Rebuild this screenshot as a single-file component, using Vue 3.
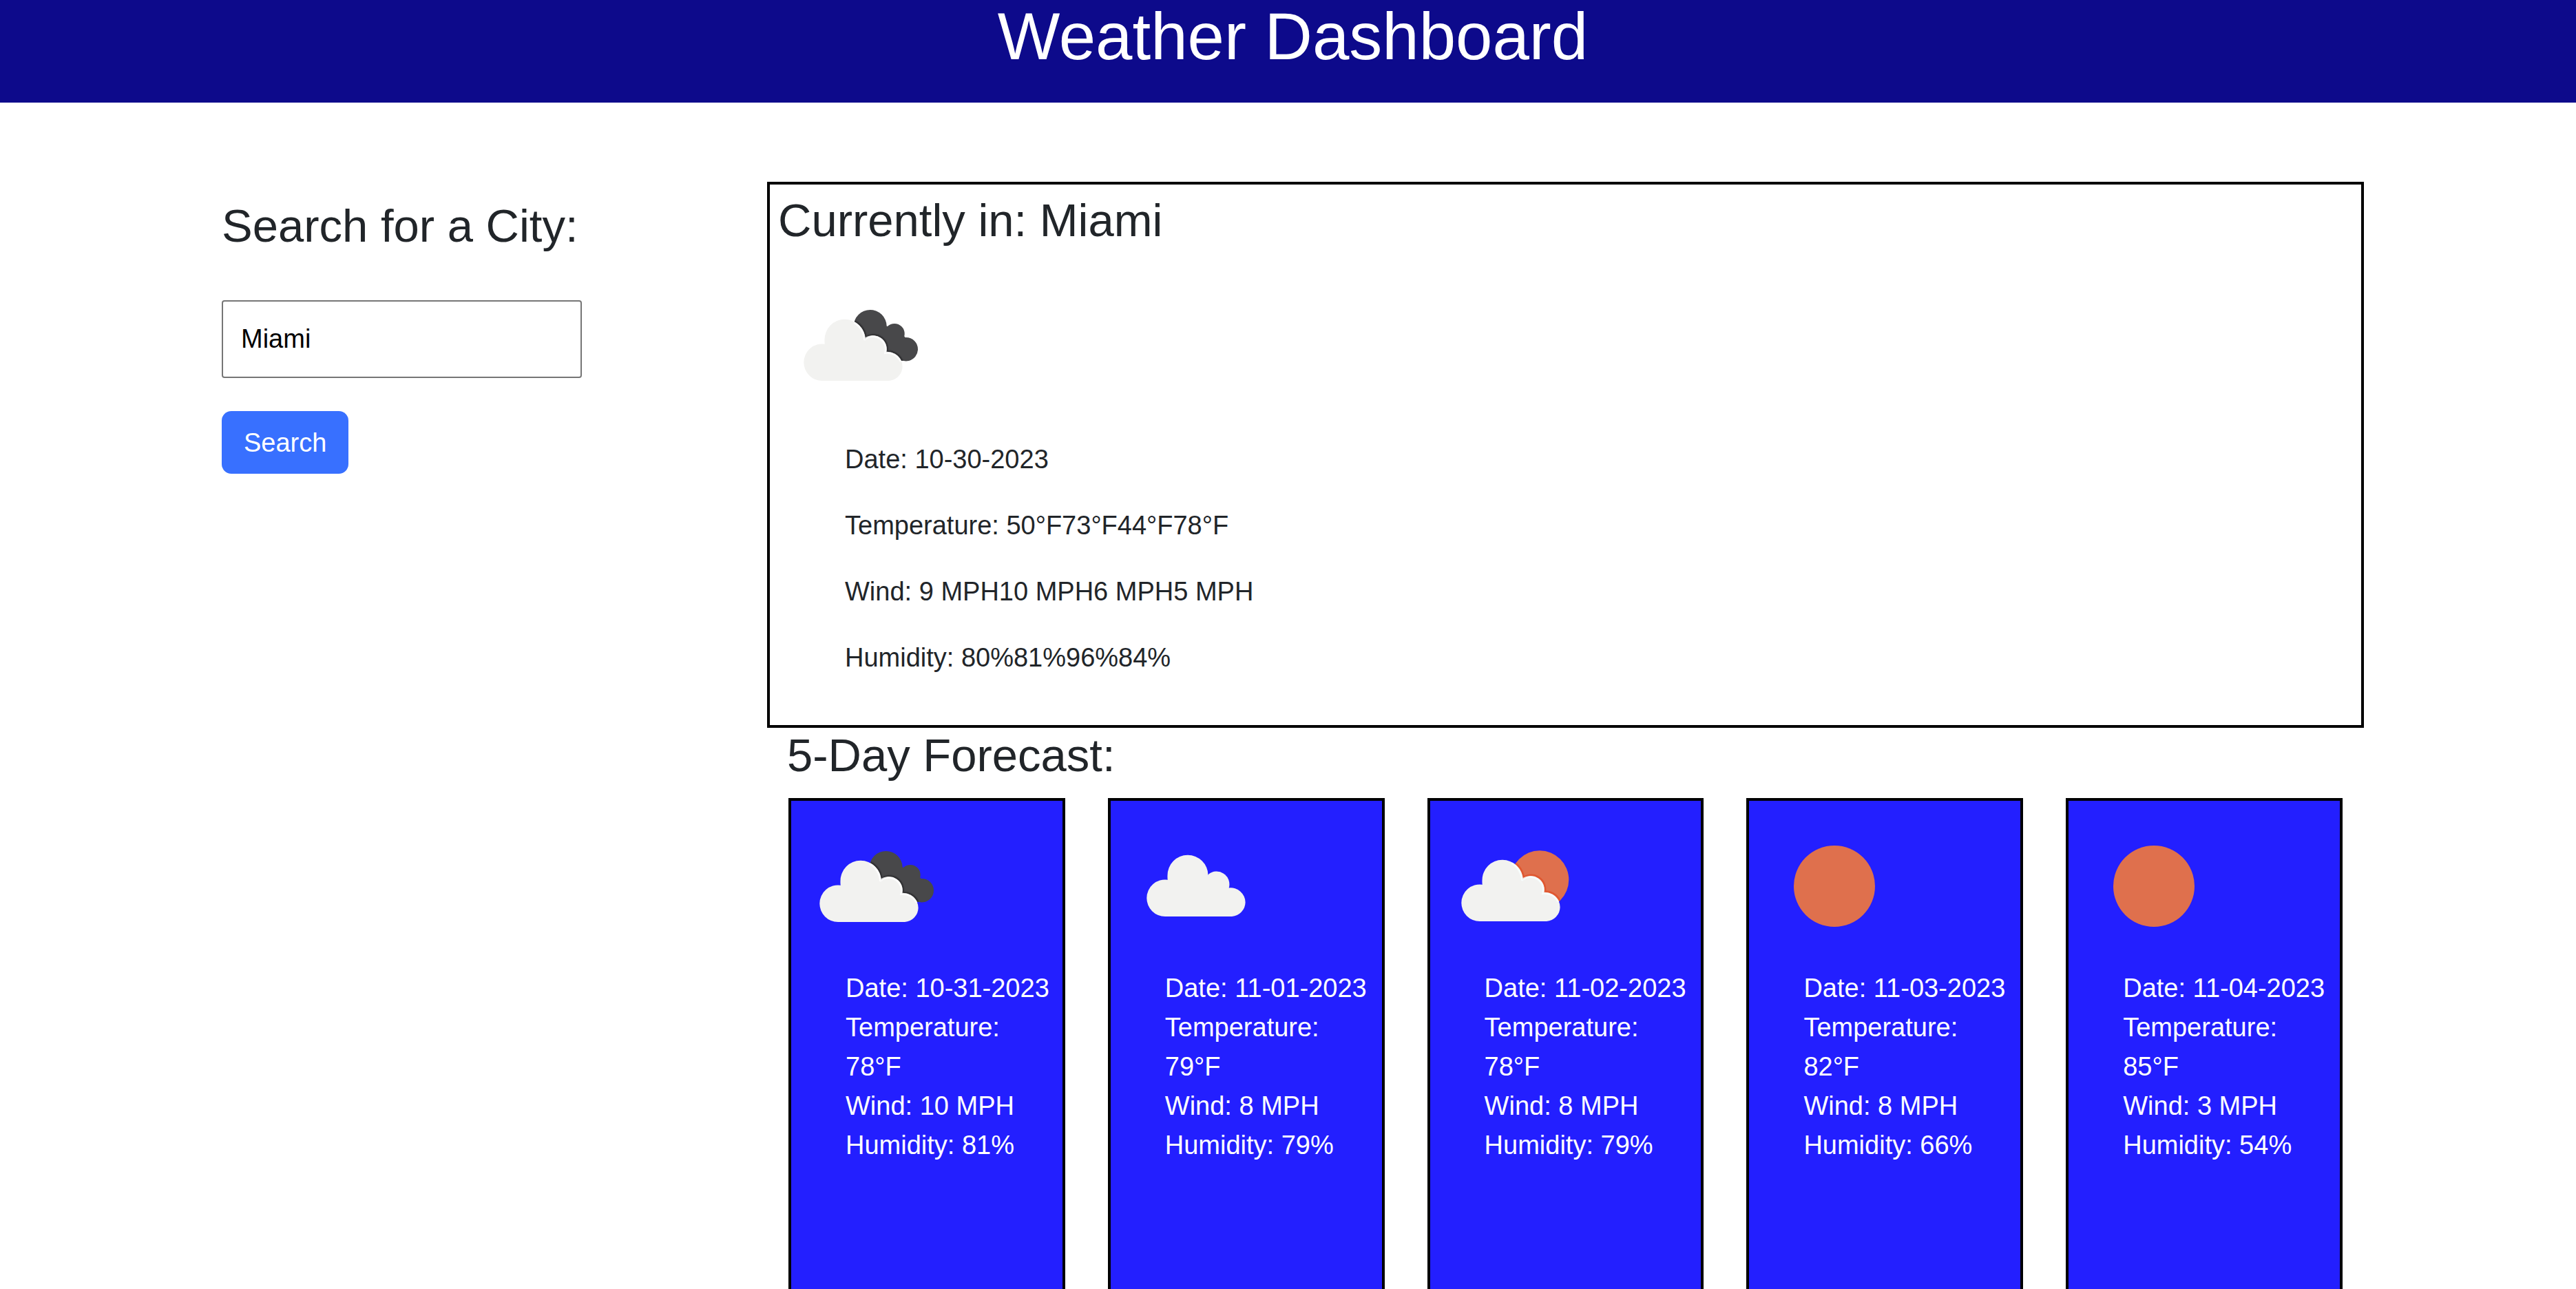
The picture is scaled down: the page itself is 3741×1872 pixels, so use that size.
<script setup>
import { ref } from 'vue'

const city = ref('Miami')

const current = {
  city: 'Miami',
  icon: 'broken',
  rows: [
    'Date: 10-30-2023',
    'Temperature: 50°F73°F44°F78°F',
    'Wind: 9 MPH10 MPH6 MPH5 MPH',
    'Humidity: 80%81%96%84%',
  ],
}

const forecast = [
  { date: '10-31-2023', icon: 'broken', temp: 78, wind: 10, humidity: 81 },
  { date: '11-01-2023', icon: 'cloud', temp: 79, wind: 8, humidity: 79 },
  { date: '11-02-2023', icon: 'partly', temp: 78, wind: 8, humidity: 79 },
  { date: '11-03-2023', icon: 'sun', temp: 82, wind: 8, humidity: 66 },
  { date: '11-04-2023', icon: 'sun', temp: 85, wind: 3, humidity: 54 },
]
</script>

<template>
  <div class="app">
    <!-- Shared weather symbols -->
    <svg class="symbols" width="0" height="0" aria-hidden="true">
      <defs>
        <path
          id="cloud-shape"
          d="M64 172A26.7 26.7 0 0 1 37.3 145.3A26.7 26.7 0 0 1 67.8 118.8A29.5 29.5 0 0 1 67.5 112.5A29.5 29.5 0 0 1 126.5 112L127 110.7A18.7 18.7 0 0 1 156.7 130.4A21.5 21.5 0 0 1 180.6 151.5A21 21 0 0 1 161 172Z"
        />
        <path
          id="cloud-edge"
          d="M111 86.5A29.5 29.5 0 0 1 126.5 112L127 110.7A18.7 18.7 0 0 1 156.7 130.4A21.5 21.5 0 0 1 179 143"
        />
        <clipPath id="dark-clip">
          <circle cx="133.7" cy="93" r="24" />
          <circle cx="169" cy="103.7" r="14.7" />
          <circle cx="185.8" cy="126.2" r="17.2" />
          <path d="M111 86L157 92L184 108L190 143H178L120 120Z" />
        </clipPath>
        <clipPath id="sun-clip">
          <circle cx="155" cy="110.6" r="42.3" />
        </clipPath>

        <symbol id="icon-broken" viewBox="0 0 240 240">
          <g clip-path="url(#dark-clip)">
            <rect width="240" height="240" fill="#48484a" />
            <use href="#cloud-edge" fill="none" stroke="#1c1c1e" stroke-width="6" opacity="0.3" />
            <use href="#cloud-edge" fill="none" stroke="#1c1c1e" stroke-width="3" opacity="0.5" />
          </g>
          <use href="#cloud-shape" fill="#f2f2f0" />
          <use href="#cloud-edge" x="-1" y="1" fill="none" stroke="#ffffff" stroke-width="3" opacity="0.8" />
        </symbol>

        <symbol id="icon-cloud" viewBox="0 0 240 240">
          <use href="#cloud-shape" x="11" y="-8" fill="#f2f2f0" />
        </symbol>

        <symbol id="icon-partly" viewBox="0 0 240 240">
          <g clip-path="url(#sun-clip)">
            <rect width="240" height="240" fill="#df704d" />
            <use href="#cloud-edge" x="4" y="-1" fill="none" stroke="#e0532a" stroke-width="6" opacity="0.8" />
          </g>
          <use href="#cloud-shape" x="4" y="-1" fill="#f2f2f0" />
          <use href="#cloud-edge" x="3" y="0" fill="none" stroke="#f7ffff" stroke-width="3" opacity="0.8" />
        </symbol>

        <symbol id="icon-sun" viewBox="0 0 240 240">
          <circle cx="120" cy="120" r="59" fill="#df704d" />
        </symbol>
      </defs>
    </svg>

    <header class="banner">
      <h1>Weather Dashboard</h1>
    </header>

    <div class="layout">
      <form class="search" @submit.prevent>
        <label class="heading" for="city">Search for a City:</label>
        <input id="city" v-model="city" class="field" type="text" />
        <button class="button" type="submit">Search</button>
      </form>

      <main>
        <section class="current">
          <h2 class="heading">Currently in: {{ current.city }}</h2>
          <svg class="icon"><use :href="'#icon-' + current.icon" /></svg>
          <ul class="current-list">
            <li v-for="row in current.rows" :key="row">{{ row }}</li>
          </ul>
        </section>

        <section>
          <h2 class="heading forecast-title">5-Day Forecast:</h2>
          <div class="cards">
            <article v-for="day in forecast" :key="day.date" class="card">
              <svg class="icon"><use :href="'#icon-' + day.icon" /></svg>
              <ul class="card-list">
                <li>Date: {{ day.date }}</li>
                <li>Temperature: {{ day.temp }}°F</li>
                <li>Wind: {{ day.wind }} MPH</li>
                <li>Humidity: {{ day.humidity }}%</li>
              </ul>
            </article>
          </div>
        </section>
      </main>
    </div>
  </div>
</template>

<style>
body {
  margin: 0;
  background: #ffffff;
}
</style>

<style scoped>
.app {
  height: 100vh;
  overflow: hidden;
  color: #212529;
  font-family: "Liberation Sans", Arial, sans-serif;
  font-size: 38px;
  line-height: 58px;
}

.symbols {
  position: absolute;
}

h1,
h2,
ul {
  margin: 0;
  padding: 0;
  font-weight: 400;
}

ul {
  list-style: none;
}

.banner {
  box-sizing: border-box;
  height: 149px;
  padding-left: 14px;
  background: #0d0a8b;
  color: #ffffff;
  text-align: center;
}

h1 {
  font-size: 96px;
  line-height: 106px;
}

.layout {
  display: grid;
  grid-template-columns: 792px 1fr;
  align-items: start;
  padding: 115px 308px 0 322px;
}

.search {
  display: flex;
  flex-direction: column;
  align-items: flex-start;
  padding-top: 24px;
}

.heading {
  font-size: 67px;
  line-height: 80px;
}

.field {
  box-sizing: border-box;
  width: 523px;
  height: 113px;
  margin: 68px 0 48px;
  padding: 0 26px;
  border: 2px solid #767676;
  border-radius: 4px;
  background: #ffffff;
  color: #000000;
  font: inherit;
}

.button {
  padding: 17px 32px 16px;
  border: 0;
  border-radius: 14px;
  background: #3870ff;
  color: #ffffff;
  font: inherit;
}

.current {
  padding: 12px 12px 31px;
  border: 4px solid #000000;
}

.current .heading {
  margin-bottom: 21px;
}

.icon {
  display: block;
  width: 240px;
  height: 240px;
}

.current-list {
  padding: 17px 0 0 97px;
}

.current-list li {
  margin-bottom: 38px;
}

.forecast-title {
  padding-left: 29px;
  margin-bottom: 22px;
}

.cards {
  display: grid;
  grid-template-columns: repeat(5, 1fr);
  gap: 62px;
  padding: 0 31px;
}

.card {
  box-sizing: border-box;
  min-height: 760px;
  padding: 4px;
  border: 4px solid #000000;
  background: #231fff;
  color: #ffffff;
}

.card-list {
  padding-left: 75px;
  line-height: 57px;
}
</style>
